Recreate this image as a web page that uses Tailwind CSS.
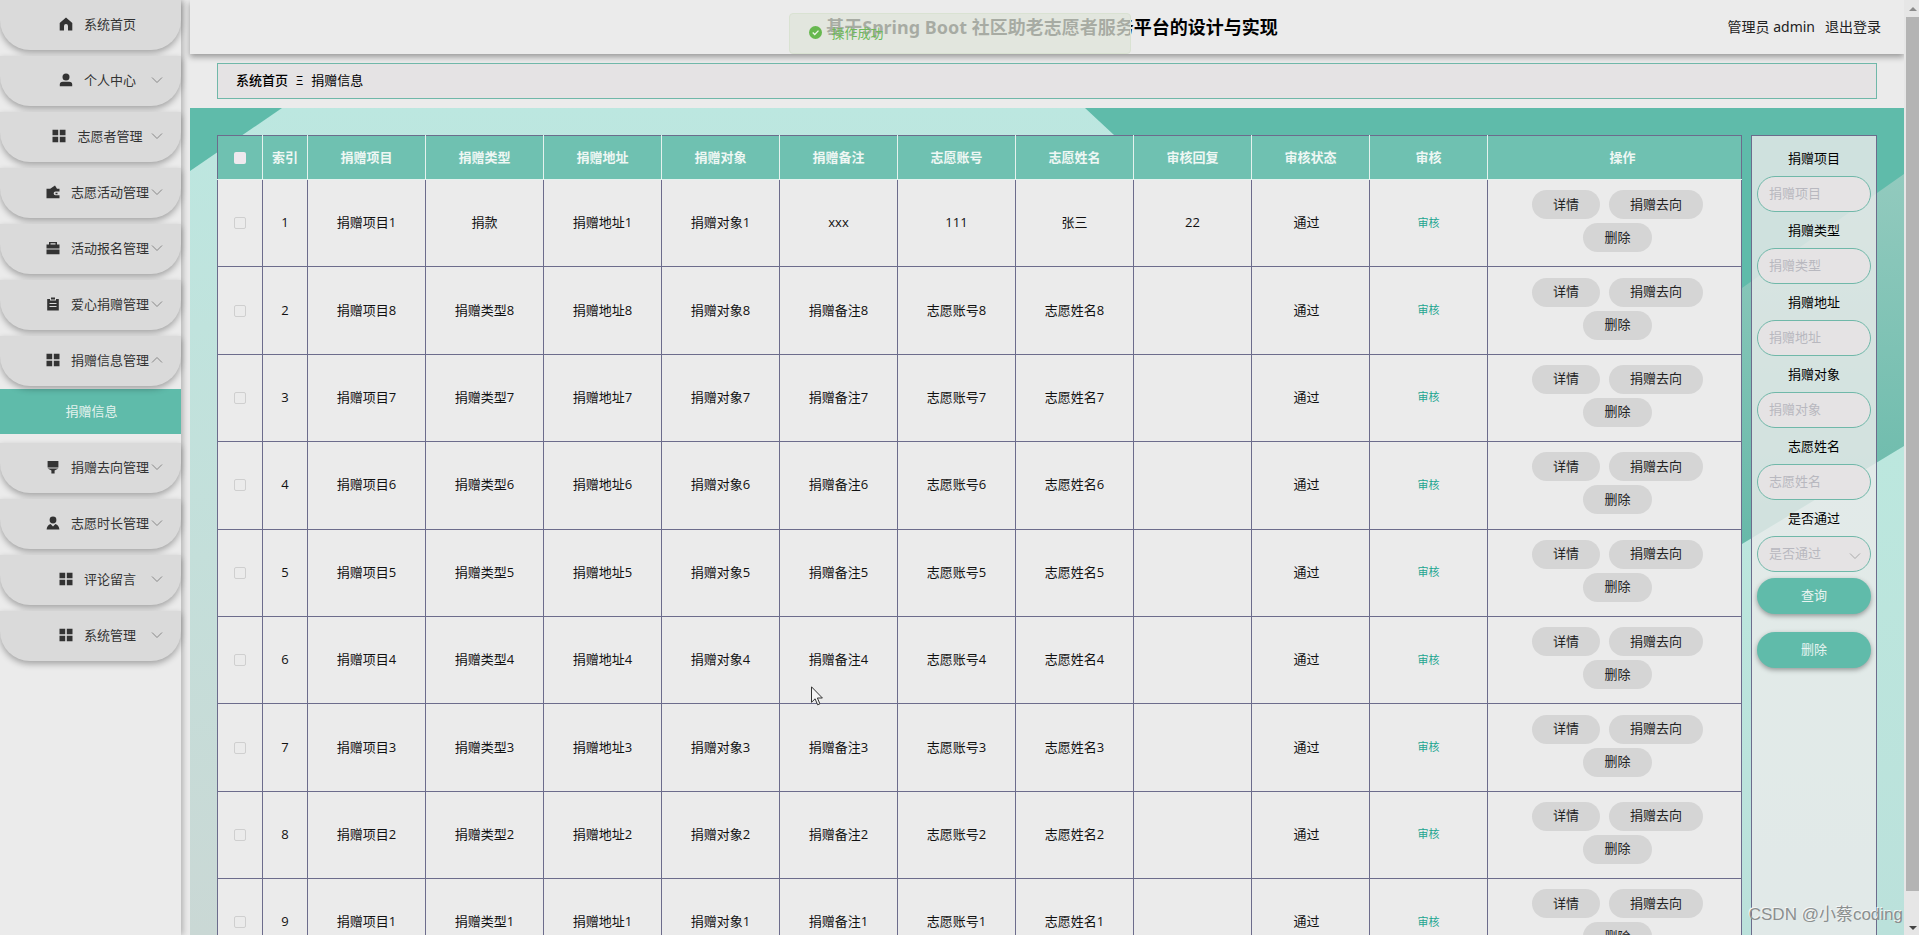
<!DOCTYPE html>
<html lang="zh-CN">
<head>
<meta charset="utf-8">
<title>基于Spring Boot 社区助老志愿者服务平台的设计与实现</title>
<script src="https://cdn.jsdelivr.net/npm/@tailwindcss/browser@4"></script>
</head>
<body class="h-screen overflow-hidden bg-[#ebebeb] font-['Open_Sans','Noto_Sans_CJK_SC',sans-serif] text-[13px] leading-5 text-[#111]">
<svg class="hidden">
  <symbol id="home" viewBox="0 0 14 14"><path d="M7 .6 13.3 6v7.4H9V9a2 2 0 0 0-4 0v4.400H.7V6z"/></symbol>
  <symbol id="user" viewBox="0 0 14 14"><circle cx="7" cy="4" r="3.500"/><path d="M.8 13.300v-2q0-2.600 3-2.600h6.400q3 0 3 2.600v2z"/></symbol>
  <symbol id="grid" viewBox="0 0 14 14"><path d="M.5.800h5.700v5.400H.5zM7.800.800h5.700v5.400H7.800zM.5 7.800h5.700v5.400H.5zM7.800 7.800h5.700v5.400H7.800z"/></symbol>
  <symbol id="wallet" viewBox="0 0 14 14"><path fill-rule="evenodd" d="M.5 3.800h3.700L9 .6l2 3.200h2.500v2.700H9.500a1.800 1.800 0 0 0 0 3.700h4V13.200H.5zM9.500 7.800h2v1.500h-2z"/></symbol>
  <symbol id="bag" viewBox="0 0 14 14"><path fill-rule="evenodd" d="M3 3.500V1h8v2.500h2.500v4H.5v-4zm1.500 0h5v-1.200h-5zM.5 8.500h13V13.200H.5z"/></symbol>
  <symbol id="clip" viewBox="0 0 14 14"><path fill-rule="evenodd" d="M1.200 2H4v1.500h6V2h2.800v11.600H1.200zM3.500 6v1h7V6zm0 3v1h7V9zM5 .4h4v2.200H5z"/></symbol>
  <symbol id="brush" viewBox="0 0 14 14"><path d="M1.600 1h10.800v6.500H1.600zM1.600 8.500h10.800L8.600 10.500v3.100H5.400v-3.100z"/></symbol>
  <symbol id="person" viewBox="0 0 14 14"><circle cx="7" cy="4" r="3.400"/><path d="M.6 13.500q.4-4.500 4-5.500L7 10.500 9.400 8q3.600 1 4 5.500z"/></symbol>
  <symbol id="down" viewBox="0 0 12 12"><path d="M1 3.500 6 8.500l5-5" fill="none" stroke="currentColor"/></symbol>
  <symbol id="up" viewBox="0 0 12 12"><path d="M1 8.500 6 3.500l5 5" fill="none" stroke="currentColor"/></symbol>
</svg>

<div class="flex h-full">
  <aside class="w-[181px] shrink-0 shadow-[2px_0_6px_rgba(0,0,0,0.25)]">
    <nav id="menu" class="flex flex-col gap-1.5"></nav>
  </aside>

  <main class="ml-[9px] flex min-w-0 flex-1 flex-col">
    <header class="grid h-[54px] shrink-0 grid-cols-[1fr_auto_1fr] items-center px-[23px] font-['Noto_Sans','Noto_Sans_CJK_SC',sans-serif] shadow-[0_3px_6px_rgba(0,0,0,0.35)]">
      <span></span>
      <h1 class="pl-2.5 text-lg font-bold text-black">基于Spring Boot 社区助老志愿者服务平台的设计与实现</h1>
      <div class="flex justify-end gap-2.5 text-sm text-[#222]"><span>管理员 admin</span><a href="#">退出登录</a></div>
    </header>

    <div class="mx-[27px] my-[9px] flex h-9 shrink-0 items-center gap-2 border border-[#70b8a9] bg-[#e5e3e4] px-[18px] pb-0.5 text-black">
      <a href="#" class="font-medium">系统首页</a><span>Ξ</span><span>捐赠信息</span>
    </div>

    <section class="relative min-h-0 flex-1 overflow-hidden bg-linear-to-b from-[#bce7e0] to-[#cad8d5]">
      <svg class="absolute inset-0 size-full" viewBox="0 0 1714 827" preserveAspectRatio="none">
        <defs>
          <linearGradient id="band" x1="0" y1="0" x2="0" y2="1"><stop offset="0" stop-color="#92cabe"/><stop offset="1" stop-color="#5db5a4"/></linearGradient>
          <linearGradient id="low" x1="0" y1="0" x2="0" y2="1"><stop offset="0" stop-color="#bce7de"/><stop offset="1" stop-color="#bbe1db"/></linearGradient>
        </defs>
        <path d="M0 0h92L0 63z" fill="#5fbbaa"/>
        <path d="M895 0h819v827H1400V470z" fill="#5fbbaa"/>
        <path d="M1714 66v272L1400 528V287z" fill="url(#band)"/>
        <path d="M1714 338v489H1400V528z" fill="url(#low)"/>
      </svg>
      <div class="relative flex gap-[9px] px-[27px] pt-[27px]">
        <table class="h-[919px] w-full min-w-0 flex-1 table-fixed border-collapse border border-[#6c6c8c] bg-[#ebebeb] text-center">
          <colgroup><col class="w-[45px]"><col class="w-[45px]"><col span="10"><col class="w-[254px]"></colgroup>
          <thead><tr id="head" class="h-11 bg-[#6fc1b1] text-[#eef7f4]"></tr></thead>
          <tbody id="rows"></tbody>
        </table>
        <form id="filter" class="flex w-[126px] shrink-0 flex-col border border-[#6c6c8c] bg-[#ebebeb]/80 px-[5px] pt-2 text-center text-black"></form>
      </div>
    </section>
  </main>

  <div class="flex w-[15px] shrink-0 flex-col items-end bg-[#e6e6e6]">
    <svg class="h-[17px] w-[13px]" viewBox="0 0 13 17"><path d="M3 11h8L7 7z" fill="#8c8c8c"/></svg>
    <div class="w-[13px] flex-1 bg-[#b4b4b4]"></div>
    <svg class="h-11 w-[13px]" viewBox="0 0 13 44"><path d="M3 35h8l-4 4z" fill="#444"/></svg>
  </div>
</div>

<div role="status" class="absolute top-[13px] left-1/2 flex h-[41px] w-[342px] -translate-x-1/2 items-center gap-2.5 rounded border border-[#d9e2d2] bg-[#dfe4da]/75 px-[19px] pb-0.5 text-[#6db95a]">
  <svg class="size-[13px]" viewBox="0 0 14 14"><circle cx="7" cy="7" r="7" fill="#67b84f"/><path d="m4 7 2.200 2.200L10.200 5" fill="none" stroke="#eef5ea" stroke-width="1.400"/></svg>
  <span>操作成功</span>
</div>
<div class="absolute right-4 bottom-1.5 font-['Liberation_Sans','Noto_Sans_CJK_SC',sans-serif] text-[17px] leading-7 text-[#8b8f8f] [text-shadow:-1px_-1px_0_#f5f5f5]">CSDN @小蔡coding</div>
<svg class="absolute top-[686px] left-[811px] h-5 w-[13px]" viewBox="0 0 13 20"><path d="M.5.800v15.500l3.600-3.500 2.500 6 2.300-1-2.500-5.800h5z" fill="#f4f4f4" stroke="#333"/></svg>

<script>
const icon = (id, cls) => `<svg class="${cls}"><use href="#${id}"/></svg>`;
const menu = [['home','系统首页'],['user','个人中心'],['grid','志愿者管理'],['wallet','志愿活动管理'],['bag','活动报名管理'],['clip','爱心捐赠管理'],['grid','捐赠信息管理'],['brush','捐赠去向管理'],['person','志愿时长管理'],['grid','评论留言'],['grid','系统管理']];
document.getElementById('menu').innerHTML = menu.map(([i, t], n) =>
  `<button type="button" class="relative flex h-[50px] w-full items-center justify-center gap-[11px] rounded-b-[30px] bg-[#dadada] pb-0.5 pl-3.5 text-[#333] shadow-[0_3px_6px_rgba(0,0,0,0.3)]">${icon(i, 'size-3.5 fill-[#333]')}<span>${t}</span>${n ? icon(n === 6 ? 'up' : 'down', 'absolute right-[18px] size-3 text-[#888]') : ''}</button>` +
  (n === 6 ? '<a href="#" class="-mt-[3px] mb-[3px] flex h-[45px] items-center justify-center bg-[#5fbbaa] pb-0.5 pl-0.5 text-[#e4f2ee]">捐赠信息</a>' : '')).join('');

const heads = ['索引','捐赠项目','捐赠类型','捐赠地址','捐赠对象','捐赠备注','志愿账号','志愿姓名','审核回复','审核状态','审核','操作'];
document.getElementById('head').innerHTML =
  '<th class="border-r border-b border-[#e4f2ee]"><input type="checkbox" aria-label="全选" class="block mx-auto size-3 appearance-none rounded-xs bg-[#efe9ee]"></th>' +
  heads.map((t, n) => `<th class="border-b border-[#e4f2ee] pb-0.5 font-bold ${n < 11 ? 'border-r' : 'pl-4'}">${t}</th>`).join('');

const names = ['捐赠项目','捐赠类型','捐赠地址','捐赠对象','捐赠备注','志愿账号','志愿姓名'];
const data = [['捐赠项目1','捐款','捐赠地址1','捐赠对象1','xxx','111','张三','22']];
for (let n = 8; n > 0; n--) data.push([...names.map(t => t + n), '']);
data.push([...names.map(t => t + 1), '']);
const op = t => `<button type="button" class="h-[29px] rounded-full bg-[#d5d5d5] px-[21px] pb-0.5 text-[#222]">${t}</button>`;
document.getElementById('rows').innerHTML = data.map((r, n) =>
  `<tr><td class="border border-[#6c6c8c]"><input type="checkbox" aria-label="选择第${n + 1}行" class="block mx-auto size-3 appearance-none rounded-xs border border-[#cfcfcf]"></td>` +
  [n + 1, ...r].map(t => `<td class="border border-[#6c6c8c] pb-0.5">${t}</td>`).join('') +
  `<td class="border border-[#6c6c8c] pr-2 pb-0.5">通过</td><td class="border border-[#6c6c8c] pb-0.5"><a href="#" class="text-[11px] text-[#22a590]">审核</a></td>` +
  `<td class="border border-[#6c6c8c]"><div class="-mt-1 ml-1.5 flex flex-wrap justify-center gap-x-[9px] gap-y-1 px-6">${op('详情')}${op('捐赠去向')}${op('删除')}</div></td></tr>`).join('');

const field = 'h-9 w-full rounded-full border border-[#70b8a9] bg-[#e5e3e4] px-[11px] pb-0.5';
document.getElementById('filter').innerHTML =
  ['捐赠项目','捐赠类型','捐赠地址','捐赠对象','志愿姓名'].map((t, n) =>
    `<label for="f${n}" class="mt-1 h-7 leading-5">${t}</label><input id="f${n}" placeholder="${t}" class="${field} mb-1 placeholder:text-[#b8b8bf]">`).join('') +
  `<label for="pass" class="mt-1 h-7 leading-5">是否通过</label><div class="relative mb-1.5"><select id="pass" class="${field} appearance-none text-[#b8b8bf]"><option>是否通过</option></select>${icon('down', 'pointer-events-none absolute top-3.5 right-2.5 size-3 text-[#aaa]')}</div>` +
  ['查询','删除'].map(t => `<button type="button" class="mb-[18px] h-9 rounded-full bg-[#60bbaa] pb-0.5 text-[#e8f4f1] shadow-[0_2px_5px_rgba(0,0,0,0.35)]">${t}</button>`).join('');
</script>
</body>
</html>
